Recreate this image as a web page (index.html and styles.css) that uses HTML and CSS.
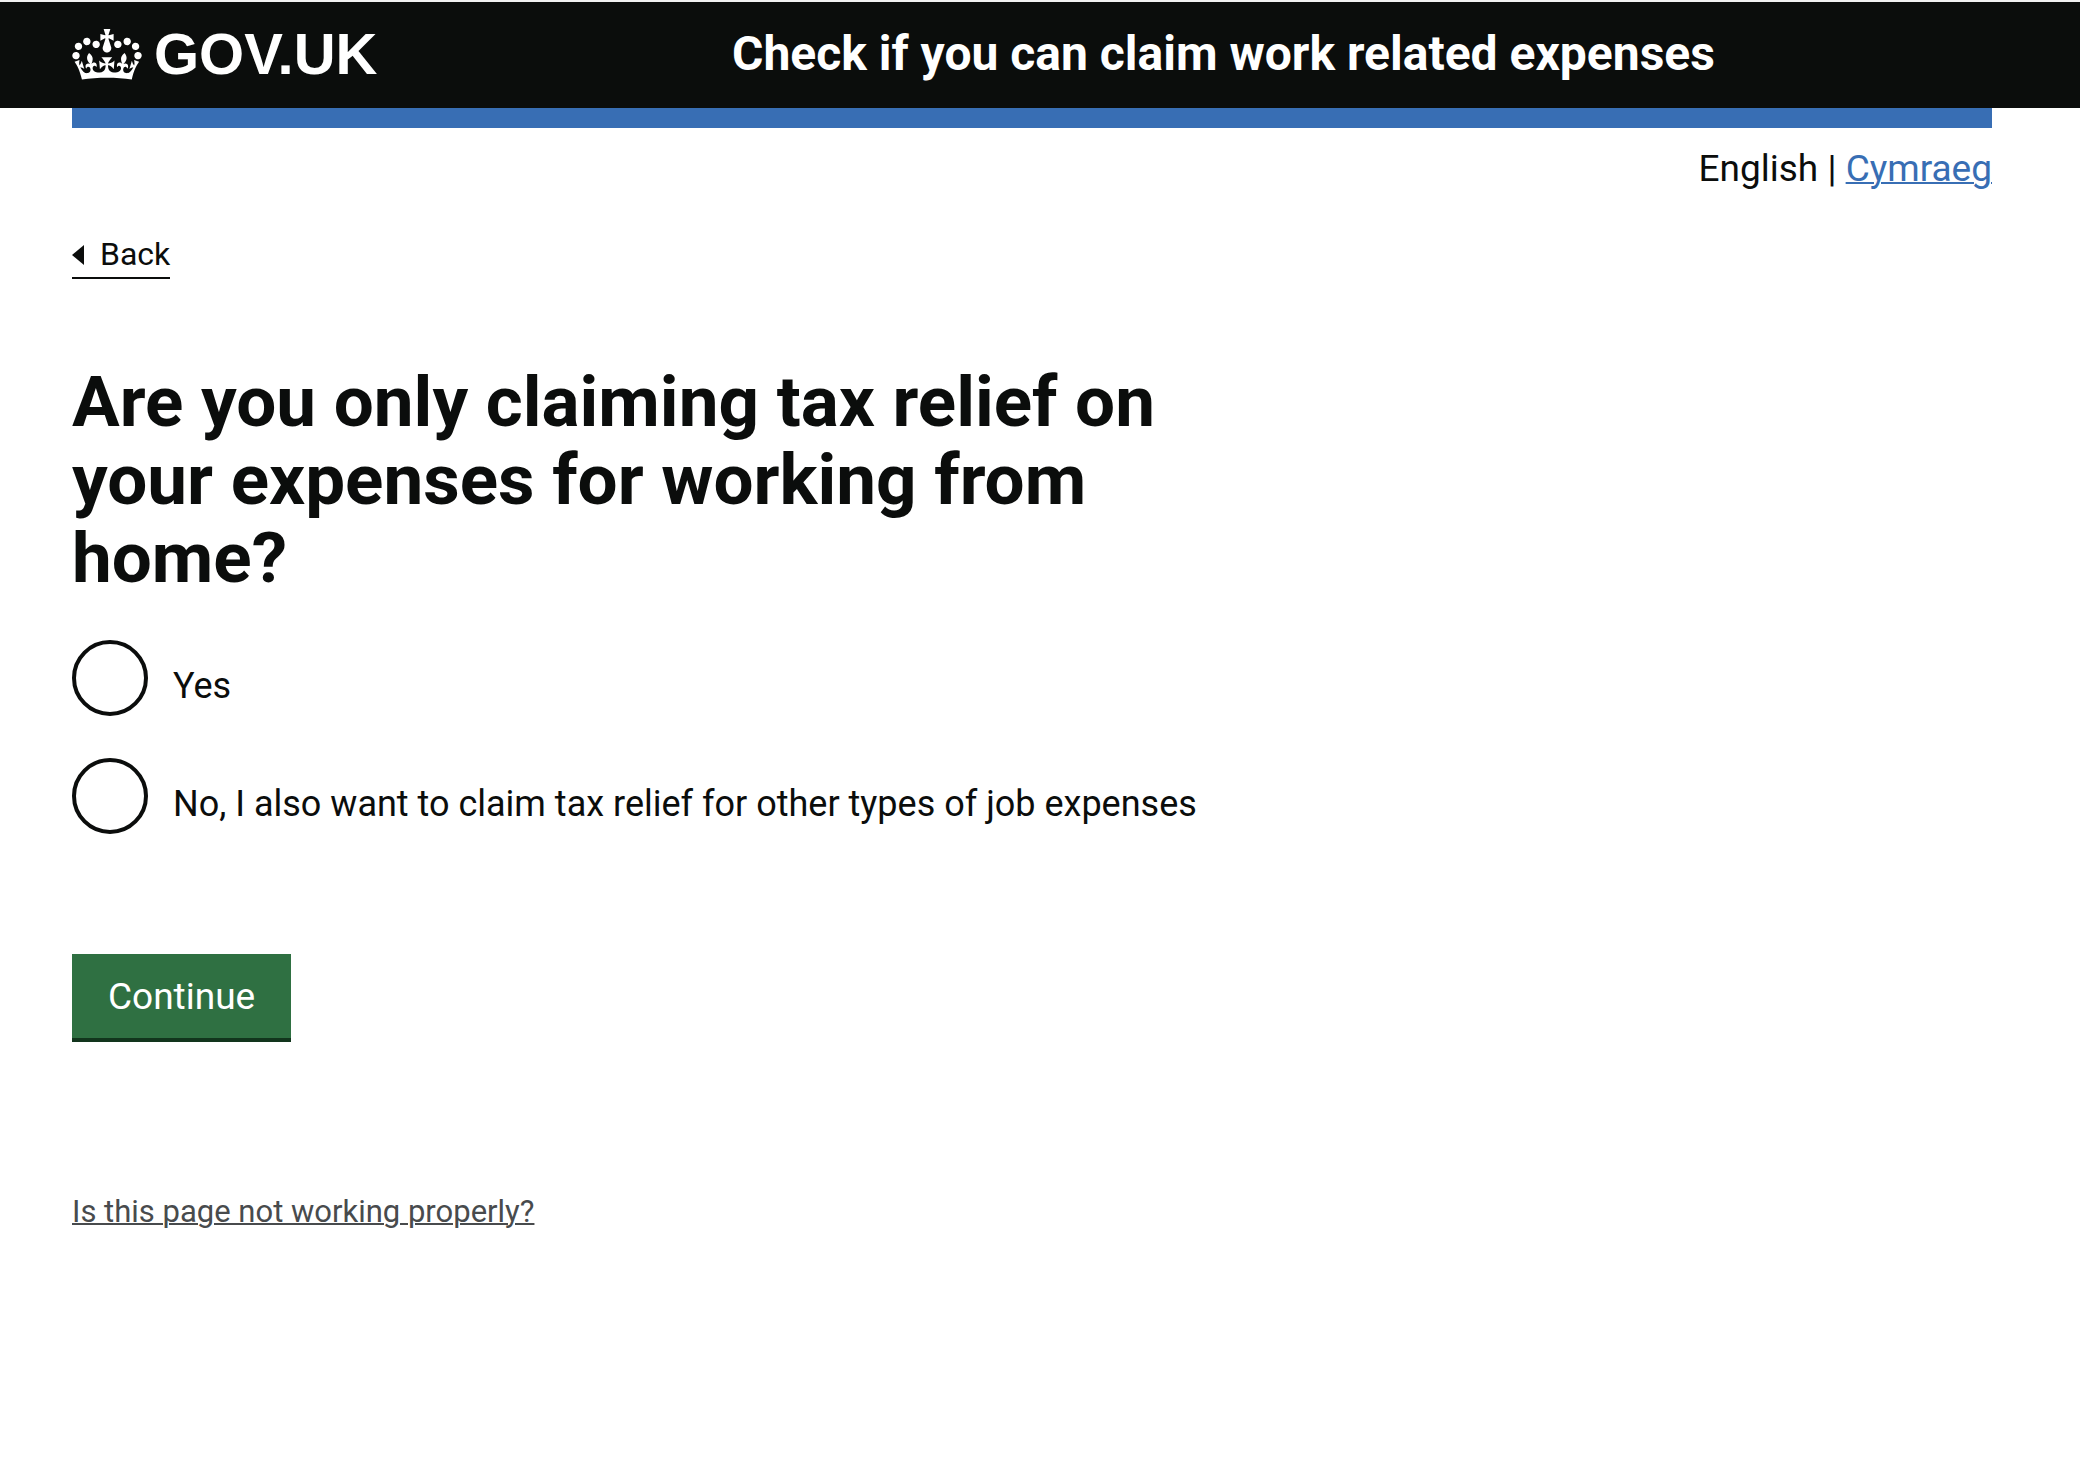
FILE: index.html
```html
<!DOCTYPE html>
<html lang="en">
<head>
  <meta charset="UTF-8">
  <meta name="viewport" content="width=device-width, initial-scale=1.0">
  <title>Check if you can claim work related expenses - GOV.UK</title>
  <link rel="stylesheet" href="styles.css">
</head>
<body>
  <header class="header">
    <div class="container header-row">
      <a class="logo" href="#">
        <svg class="crown" viewBox="0 0 132 97" aria-hidden="true">
          <path fill="currentColor" d="M25 30.2c3.5 1.5 7.7-.2 9.1-3.7 1.5-3.6-.2-7.8-3.9-9.2-3.6-1.4-7.6.3-9.1 3.9-1.4 3.5.3 7.5 3.9 9zM9 39.5c3.6 1.5 7.8-.2 9.2-3.7 1.5-3.6-.2-7.8-3.9-9.1-3.6-1.5-7.6.2-9.1 3.8-1.4 3.5.3 7.5 3.8 9zM4.4 57.2c3.5 1.5 7.7-.2 9.1-3.8 1.5-3.6-.2-7.7-3.9-9.1-3.5-1.5-7.6.3-9.1 3.8-1.4 3.5.3 7.6 3.9 9.1zm38.3-21.4c3.5 1.5 7.7-.2 9.1-3.8 1.5-3.6-.2-7.7-3.9-9.1-3.6-1.5-7.6.3-9.1 3.8-1.3 3.6.4 7.7 3.9 9.1zm64.4-5.6c-3.6 1.5-7.8-.2-9.1-3.7-1.5-3.6.2-7.8 3.8-9.2 3.6-1.4 7.7.3 9.2 3.9 1.3 3.5-.4 7.5-3.9 9zm15.9 9.3c-3.6 1.5-7.7-.2-9.1-3.7-1.5-3.6.2-7.8 3.7-9.1 3.6-1.5 7.7.2 9.2 3.8 1.5 3.5-.3 7.5-3.8 9zm4.7 17.7c-3.6 1.5-7.8-.2-9.2-3.8-1.5-3.6.2-7.7 3.9-9.1 3.6-1.5 7.7.3 9.2 3.8 1.3 3.5-.4 7.6-3.9 9.1zM89.3 35.8c-3.6 1.5-7.8-.2-9.2-3.8-1.4-3.6.2-7.7 3.9-9.1 3.6-1.5 7.7.3 9.2 3.8 1.4 3.6-.3 7.7-3.9 9.1zM69.7 17.7l8.9 4.7V9.3l-8.9 2.8c-.2-.3-.5-.6-.9-.9L72.4 0H59.6l3.5 11.2c-.3.3-.6.5-.9.9l-8.8-2.8v13.1l8.8-4.7c.3.3.6.7.9.9l-5 15.4v.1c-.2.8-.4 1.6-.4 2.4 0 4.1 3.1 7.5 7 8.1h.2c.3 0 .7.1 1 .1.4 0 .7 0 1-.1h.2c4-.6 7.1-4.1 7.1-8.1 0-.8-.1-1.7-.4-2.4V34l-5.1-15.4c.4-.2.7-.6 1-.9zM66 92.8c16.9 0 32.8 1.1 47.1 3.2 4-16.9 8.9-26.7 14-33.5l-9.6-3.4c1 4.9 1.1 7.2 0 10.2-1.5-1.4-3-4.3-4.2-8.7L108.6 76c2.8-2 5-3.2 7.5-3.3-4.4 9.4-10 11.9-13.6 11.2-4.3-.8-6.3-4.6-5.6-7.9 1-4.7 5.7-5.9 8-.5 4.3-8.7-3-11.4-7.6-8.8 7.1-7.2 7.9-13.5 2.1-21.1-8 6.1-8.1 12.3-4.5 20.8-4.7-5.4-12.1-2.5-9.5 6.2 3.4-5.2 7.9-2 7.2 3.1-.6 4.3-6.4 7.8-13.5 7.2-10.3-.9-10.9-8-11.2-13.8 2.5-.5 7.1 1.8 11 7.3L80.2 60c-4.1 4.4-8 5.3-12.3 5.4 1.4-4.4 8-11.6 8-11.6H55.5s6.4 7.2 7.9 11.6c-4.2-.1-8-1-12.3-5.4l1.4 16.4c3.9-5.5 8.5-7.7 10.9-7.3-.3 5.8-.9 12.8-11.1 13.8-7.2.6-12.9-2.9-13.5-7.2-.7-5 3.8-8.3 7.1-3.1 2.7-8.7-4.6-11.6-9.4-6.2 3.7-8.5 3.6-14.7-4.6-20.8-5.8 7.6-5 13.9 2.2 21.1-4.7-2.6-11.9.1-7.7 8.8 2.3-5.5 7.1-4.2 8.1.5.7 3.3-1.3 7.1-5.7 7.9-3.5.7-9-1.8-13.5-11.2 2.5.1 4.7 1.3 7.5 3.3l-4.7-15.4c-1.2 4.4-2.7 7.2-4.3 8.7-1.1-3-.9-5.3 0-10.2l-9.5 3.4c5 6.9 9.9 16.7 14 33.5 14.8-2.1 30.8-3.2 47.7-3.2z"/>
        </svg>
        <span>GOV.UK</span>
      </a>
      <a class="service-name" href="#">Check if you can claim work related expenses</a>
    </div>
  </header>

  <div class="container">
    <div class="blue-bar"></div>

    <nav class="languages" aria-label="Language">
      <span>English</span> | <a href="#" lang="cy">Cymraeg</a>
    </nav>

    <a class="back-link" href="#">Back</a>

    <main>
      <form class="question">
        <fieldset>
          <legend><h1>Are you only claiming tax relief on your expenses for working from home?</h1></legend>
          <div class="radio">
            <input type="radio" id="onlyHome-yes" name="onlyHome" value="yes">
            <label for="onlyHome-yes">Yes</label>
          </div>
          <div class="radio">
            <input type="radio" id="onlyHome-no" name="onlyHome" value="no">
            <label for="onlyHome-no">No, I also want to claim tax relief for other types of job expenses</label>
          </div>
        </fieldset>
        <button type="button" class="button">Continue</button>
      </form>
      <a class="help-link" href="#">Is this page not working properly?</a>
    </main>
  </div>
</body>
</html>
```

FILE: styles.css
```css
:root {
  --black: #0b0d0c;
  --blue: #386eb4;
  --green: #2f7042;
  --green-dark: #12351d;
  --grey: #484b4d;
}

* {
  box-sizing: border-box;
}

body {
  margin: 0;
  font-family: Roboto, "Noto Sans", sans-serif;
  font-size: 37px;
  line-height: 50px;
  color: var(--black);
  background: #fff;
}

.container {
  padding: 0 88px 0 72px;
}

/* header */
.header {
  background: var(--black);
  border-top: 2px solid #f1f1f1;
  color: #fff;
}

.header-row {
  display: grid;
  grid-template-columns: 1fr 2fr;
  column-gap: 30px;
  align-items: center;
  padding-bottom: 2px;
  height: 106px;
}

.header a {
  color: #fff;
  text-decoration: none;
}

.logo {
  display: flex;
  align-items: center;
  gap: 12px;
  font-family: "Liberation Sans", Arial, sans-serif;
  font-size: 58px;
  line-height: 60px;
  font-weight: bold;
}

.crown {
  width: 70px;
  height: 51px;
}

.service-name {
  font-size: 48px;
  line-height: 60px;
  font-weight: bold;
}

.blue-bar {
  height: 20px;
  background: var(--blue);
}

.languages {
  margin-top: 16px;
  text-align: right;
}

.languages a {
  color: var(--blue);
  text-decoration-thickness: 2px;
}

.back-link {
  display: inline-flex;
  align-items: center;
  gap: 16px;
  margin-top: 38px;
  border-bottom: 2px solid var(--black);
  color: var(--black);
  font-size: 32px;
  line-height: 45px;
  text-decoration: none;
}

.back-link::before {
  content: "";
  border: 10px solid transparent;
  border-left: 0;
  border-right: 12px solid var(--black);
}

/* question */
.question {
  max-width: 1260px;
  margin-top: 84px;
}

fieldset {
  margin: 0;
  padding: 0;
  border: 0;
}

legend {
  max-width: 1160px;
  padding: 0;
}

h1 {
  margin: 0 0 43px;
  font-size: 71px;
  line-height: 78px;
}

.radio {
  display: flex;
  gap: 25px;
  margin-bottom: 42px;
}

.radio input {
  appearance: none;
  flex: none;
  width: 76px;
  height: 76px;
  margin: 0;
  border: 4px solid var(--black);
  border-radius: 50%;
  background: #fff;
}

.radio input:checked {
  background: radial-gradient(var(--black) 50%, #fff 52%);
}

.radio label {
  padding-top: 21px;
  font-size: 36px;
}

.button {
  display: block;
  margin-top: 78px;
  padding: 18px 36px 16px;
  border: 0;
  border-bottom: 4px solid var(--green-dark);
  background: var(--green);
  color: #fff;
  font: inherit;
}

.help-link {
  display: inline-block;
  margin-top: 145px;
  color: var(--grey);
  font-size: 31px;
  text-decoration-thickness: 2px;
}
```
